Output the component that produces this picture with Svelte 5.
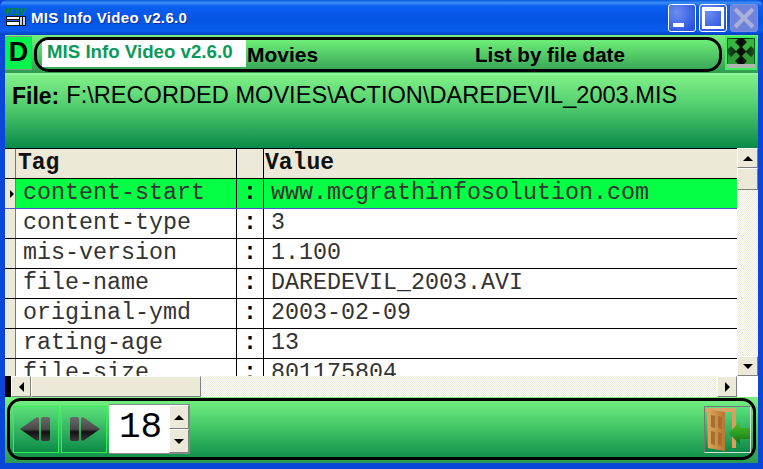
<script>
	const rows = [
		['content-start', 'www.mcgrathinfosolution.com'],
		['content-type', '3'],
		['mis-version', '1.100'],
		['file-name', 'DAREDEVIL_2003.AVI'],
		['original-ymd', '2003-02-09'],
		['rating-age', '13'],
		['file-size', '801175804']
	];
</script>

<div class="window">
	<div class="titlebar">
		<svg class="app-icon" width="20" height="22" viewBox="0 0 20 22">
			<text x="0" y="8" font-family="Liberation Mono" font-weight="bold" font-size="11" fill="#0a8a14" textLength="20" lengthAdjust="spacingAndGlyphs">MIV</text>
			<rect x="0" y="9" width="20" height="10" fill="#111" />
			<rect x="1" y="10" width="12" height="2" fill="#fff" />
			<rect x="1" y="13" width="12" height="1" fill="#2f5fe0" />
			<rect x="1" y="15" width="12" height="3" fill="#fff" />
			<rect x="14" y="10" width="5" height="8" fill="#c8d4e8" />
			<rect x="16" y="9" width="1" height="10" fill="#111" />
		</svg>
		<span class="title">MIS Info Video v2.6.0</span>
		<div class="winbtns">
			<div class="winbtn">
				<span class="min-glyph"></span>
			</div>
			<div class="winbtn">
				<span class="max-glyph"></span>
			</div>
			<div class="winbtn disabled">
				<svg width="22" height="22" viewBox="0 0 22 22">
					<path d="M2 2 L20 20 M20 2 L2 20" stroke="#aab0d8" stroke-width="4" />
				</svg>
			</div>
		</div>
	</div>

	<div class="client">
		<div class="topbar">
			<div class="d-btn">D</div>
			<div class="pill">
				<span class="app-name">MIS Info Video v2.6.0</span>
				<span class="movies">Movies</span>
				<span class="sort">List by file date</span>
			</div>
			<div class="expand">
				<svg width="28" height="30" viewBox="0 0 28 30">
					<defs>
						<linearGradient id="dk" x1="0" y1="0" x2="1" y2="0">
							<stop offset="0" stop-color="#1c5a24" />
							<stop offset="0.5" stop-color="#060606" />
							<stop offset="1" stop-color="#1c5a24" />
						</linearGradient>
					</defs>
					<rect width="28" height="30" fill="url(#dk)" />
					<path d="M1 1 L11 1 L8 4 L13 9 L9 13 L4 8 L1 11 Z" fill="#36b83e" />
					<path d="M27 1 L17 1 L20 4 L15 9 L19 13 L24 8 L27 11 Z" fill="#36b83e" />
					<path d="M1 26 L11 26 L8 23 L13 18 L9 14 L4 19 L1 16 Z" fill="#2f9e36" />
					<path d="M27 26 L17 26 L20 23 L15 18 L19 14 L24 19 L27 16 Z" fill="#2f9e36" />
					<rect x="0" y="26" width="28" height="4" fill="#b0b4ae" />
				</svg>
			</div>
		</div>

		<div class="filepanel">
			<span class="file-label">File:</span>
			<span class="file-path">F:\RECORDED MOVIES\ACTION\DAREDEVIL_2003.MIS</span>
		</div>

		<div class="gridarea">
			<div class="grid">
				<div class="row head">
					<div class="ind"></div>
					<div class="cell tag">Tag</div>
					<div class="cell sep"></div>
					<div class="cell val">Value</div>
				</div>
				{#each rows as r, i}
					<div class="row" class:current={i === 0}>
						<div class="ind">
							{#if i === 0}<span class="pointer"></span>{/if}
						</div>
						<div class="cell tag">{r[0]}</div>
						<div class="cell sep">:</div>
						<div class="cell val">{r[1]}</div>
					</div>
				{/each}
			</div>
			<div class="vscroll">
				<div class="sbtn"><span class="arrow up"></span></div>
				<div class="thumb-v"></div>
				<div class="track"></div>
				<div class="sbtn"><span class="arrow down"></span></div>
			</div>
		</div>

		<div class="hscrollrow">
			<div class="blackstub"></div>
			<div class="hscroll">
				<div class="sbtn wide"><span class="arrow left"></span></div>
				<div class="thumb-h"></div>
				<div class="track"></div>
				<div class="sbtn wide"><span class="arrow right"></span></div>
			</div>
			<div class="corner"></div>
		</div>

		<div class="bottompanel">
			<div class="bottompill">
				<div class="navbtn">
					<svg width="44" height="30" viewBox="0 0 44 30">
						<defs>
							<linearGradient id="metal" x1="0" y1="0" x2="0" y2="1">
								<stop offset="0" stop-color="#6a6a6a" />
								<stop offset="0.5" stop-color="#4a4a4a" />
								<stop offset="0.62" stop-color="#111" />
								<stop offset="1" stop-color="#3a3a3a" />
							</linearGradient>
						</defs>
						<path d="M6 15 L23 3 L25 4 L25 26 L23 27 Z" fill="url(#metal)" />
						<rect x="27" y="3" width="9" height="24" rx="2" fill="url(#metal)" />
					</svg>
				</div>
				<div class="navbtn">
					<svg width="44" height="30" viewBox="0 0 44 30">
						<rect x="8" y="3" width="9" height="24" rx="2" fill="url(#metal)" />
						<path d="M38 15 L21 3 L19 4 L19 26 L21 27 Z" fill="url(#metal)" />
					</svg>
				</div>
				<div class="spin">
					<span class="spin-val">18</span>
					<div class="spin-btns">
						<div class="sbtn spinb"><span class="arrow up"></span></div>
						<div class="sbtn spinb"><span class="arrow down"></span></div>
					</div>
				</div>
				<div class="exit">
					<svg width="45" height="45" viewBox="0 0 45 45">
						<defs>
							<linearGradient id="wood" x1="0" y1="0" x2="1" y2="0">
								<stop offset="0" stop-color="#e0a860" />
								<stop offset="1" stop-color="#b87530" />
							</linearGradient>
							<linearGradient id="arw" x1="0" y1="0" x2="0" y2="1">
								<stop offset="0" stop-color="#4fc22c" />
								<stop offset="0.55" stop-color="#2c9a1e" />
								<stop offset="1" stop-color="#0b6a14" />
							</linearGradient>
						</defs>
						<path d="M1 1 L31 1 L31 5 L1 5 Z" fill="#d8a468" />
						<rect x="27" y="4" width="4" height="37" fill="#d9a05c" />
						<path d="M2 2 L20 5 L20 44 L3 41 Z" fill="url(#wood)" />
						<path d="M6 8 L10 9 L10 21 L6 20 Z" fill="#a86c2c" />
						<path d="M13 9 L17 10 L17 22 L13 21 Z" fill="#a86c2c" />
						<path d="M6 24 L10 25 L10 38 L6 37 Z" fill="#a86c2c" />
						<path d="M13 25 L17 26 L17 39 L13 38 Z" fill="#a86c2c" />
						<path d="M24 26 L35 14 L35 21 L45 21 L45 32 L35 32 L35 38 Z" fill="url(#arw)" />
					</svg>
				</div>
			</div>
		</div>
	</div>
</div>

<style>
	:global(body) {
		margin: 0;
		overflow: hidden;
	}
	.window {
		width: 763px;
		height: 469px;
		display: flex;
		flex-direction: column;
		box-sizing: border-box;
		background: #0a47d8;
		font-family: "Liberation Sans", Arial, sans-serif;
		overflow: hidden;
	}
	.titlebar {
		height: 35px;
		flex: none;
		display: flex;
		align-items: center;
		padding: 0 5px 0 6px;
		box-sizing: border-box;
		background: linear-gradient(180deg, #0a5be0 0%, #3c8df5 8%, #0a5ff0 18%, #0553e2 60%, #0a5ff0 88%, #0340c0 100%);
		border-radius: 7px 7px 0 0;
	}
	.app-icon {
		flex: none;
		margin-top: 1px;
	}
	.title {
		margin-left: 5px;
		color: #fff;
		font: bold 15px "Liberation Sans", Arial, sans-serif;
		letter-spacing: 0.35px;
		text-shadow: 1px 1px 0 #0f2fa0;
	}
	.winbtns {
		margin-left: auto;
		display: flex;
		gap: 3px;
	}
	.winbtn {
		width: 26px;
		height: 26px;
		border: 1px solid #fff;
		border-radius: 3px;
		background: radial-gradient(circle at 30% 30%, #6d8ef0, #2a55e0 80%);
		position: relative;
		display: flex;
		align-items: center;
		justify-content: center;
	}
	.winbtn.disabled {
		border-color: #7a8fe0;
		background: #6f83dc;
	}
	.min-glyph {
		position: absolute;
		left: 4px;
		bottom: 4px;
		width: 11px;
		height: 4px;
		background: #fff;
	}
	.max-glyph {
		width: 16px;
		height: 15px;
		border: 3px solid #fff;
		border-top-width: 4px;
	}
	.client {
		flex: 1;
		min-height: 0;
		margin: 0 5px 6px;
		display: flex;
		flex-direction: column;
		background: #ece9d8;
	}
	.topbar {
		height: 38px;
		flex: none;
		display: flex;
		align-items: flex-start;
		gap: 2px;
		padding-top: 1px;
		box-sizing: border-box;
		background: linear-gradient(180deg, #7af07e, #2f9a50);
	}
	.d-btn {
		width: 27px;
		height: 34px;
		box-sizing: border-box;
		background: #05f54e;
		border: 1px solid #8a9a8a;
		font: bold 27px "Liberation Sans", Arial, sans-serif;
		line-height: 30px;
		text-align: center;
		color: #000;
	}
	.pill {
		width: 688px;
		height: 35px;
		margin-top: 1px;
		box-sizing: border-box;
		border: 3px solid #000;
		border-radius: 15px;
		display: flex;
		align-items: center;
		padding-left: 5px;
		background: linear-gradient(180deg, #6eee78, #3aa858);
		overflow: hidden;
	}
	.app-name {
		background: #fff;
		color: #0a9a5a;
		font: bold 18.7px "Liberation Sans", Arial, sans-serif;
		width: 204px;
		height: 27px;
		line-height: 24px;
		padding-left: 5px;
		box-sizing: border-box;
		flex: none;
		margin-top: -2px;
		white-space: nowrap;
	}
	.movies {
		font: bold 21px "Liberation Sans", Arial, sans-serif;
		margin-left: 1px;
		width: 228px;
		flex: none;
	}
	.sort {
		font: bold 20.6px "Liberation Sans", Arial, sans-serif;
	}
	.expand {
		margin-left: 1px;
		width: 32px;
		height: 34px;
		box-sizing: border-box;
		border: 2px solid #3df060;
		display: flex;
		align-items: center;
		justify-content: center;
		background: #c8e8c8;
	}
	.filepanel {
		height: 75px;
		flex: none;
		box-sizing: border-box;
		padding: 8px 7px 0;
		display: flex;
		align-items: baseline;
		gap: 7px;
		border-top: 2px solid #90f59a;
		background: linear-gradient(180deg, #80f088 0%, #55d070 40%, #0a8a48 100%);
	}
	.file-label {
		font: bold 23px "Liberation Sans", Arial, sans-serif;
		color: #000;
	}
	.file-path {
		font: 23.6px "Liberation Sans", Arial, sans-serif;
		color: #000;
		position: relative;
		top: -1px;
	}
	.gridarea {
		height: 228px;
		flex: none;
		display: flex;
		overflow: hidden;
	}
	.grid {
		width: 732px;
		flex: none;
		background: #fff;
		overflow: hidden;
		border-top: 1px solid #000;
		box-sizing: border-box;
	}
	.row {
		display: flex;
		height: 30px;
		box-sizing: border-box;
		border-bottom: 1px solid #000;
		font: 23.33px "Liberation Mono", "Courier New", monospace;
		color: #333;
	}
	.ind {
		width: 11px;
		flex: none;
		background: #ece9d8;
		border-left: 1px solid #ece9d8;
		box-sizing: border-box;
		display: flex;
		align-items: center;
		justify-content: flex-end;
		border-right: 1px solid #777;
	}
	.pointer {
		width: 0;
		height: 0;
		border-left: 4px solid #000;
		border-top: 4px solid transparent;
		border-bottom: 4px solid transparent;
		margin-right: 1px;
	}
	.cell {
		box-sizing: border-box;
		line-height: 28px;
		white-space: nowrap;
		overflow: hidden;
	}
	.tag {
		width: 221px;
		padding-left: 7px;
		border-right: 1px solid #000;
		flex: none;
	}
	.sep {
		width: 27px;
		flex: none;
		text-align: center;
		font-weight: bold;
		color: #000;
		border-right: 1px solid #000;
	}
	.val {
		flex: 1;
		padding-left: 7px;
	}
	.head {
		background: #ece9d8;
		font-weight: bold;
		color: #111;
		font-size: 23px;
	}
	.head .tag {
		padding-left: 2px;
	}
	.head .val {
		padding-left: 1px;
	}
	.current {
		background: #05ff44;
		border-bottom-color: #4a58c8;
	}
	.vscroll {
		width: 21px;
		flex: none;
		display: flex;
		flex-direction: column;
		background: repeating-conic-gradient(#ece9d8 0 25%, #fff 0 50%) 0 0 / 2px 2px;
	}
	.sbtn {
		box-sizing: border-box;
		background: #ece9d8;
		border: 1px solid;
		border-color: #fff #808080 #808080 #fff;
		display: flex;
		align-items: center;
		justify-content: center;
		flex: none;
		height: 20px;
	}
	.thumb-v {
		height: 22px;
		flex: none;
		box-sizing: border-box;
		background: #ece9d8;
		border: 1px solid;
		border-color: #fff #808080 #808080 #fff;
	}
	.track {
		flex: 1;
	}
	.arrow {
		width: 0;
		height: 0;
	}
	.arrow.up {
		border-left: 5px solid transparent;
		border-right: 5px solid transparent;
		border-bottom: 5px solid #000;
	}
	.arrow.down {
		border-left: 5px solid transparent;
		border-right: 5px solid transparent;
		border-top: 5px solid #000;
	}
	.arrow.left {
		border-top: 5px solid transparent;
		border-bottom: 5px solid transparent;
		border-right: 5px solid #000;
	}
	.arrow.right {
		border-top: 5px solid transparent;
		border-bottom: 5px solid transparent;
		border-left: 5px solid #000;
	}
	.hscrollrow {
		height: 21px;
		flex: none;
		display: flex;
		background: #fff;
	}
	.blackstub {
		width: 6px;
		flex: none;
		background: #000;
	}
	.hscroll {
		width: 726px;
		flex: none;
		display: flex;
		background: repeating-conic-gradient(#ece9d8 0 25%, #fff 0 50%) 0 0 / 2px 2px;
	}
	.sbtn.wide {
		width: 20px;
		height: auto;
	}
	.thumb-h {
		width: 170px;
		flex: none;
		box-sizing: border-box;
		background: #ece9d8;
		border: 1px solid;
		border-color: #fff #808080 #808080 #fff;
	}
	.corner {
		flex: 1;
	}
	.bottompanel {
		flex: 1;
		min-height: 0;
		padding: 1px 2px 2px;
		background: linear-gradient(180deg, #7af07e, #2a9a50);
	}
	.bottompill {
		height: 62px;
		box-sizing: border-box;
		border: 3px solid #000;
		border-radius: 14px;
		display: flex;
		align-items: center;
		padding: 3px 2px 3px 3px;
		gap: 2px;
		background: linear-gradient(180deg, #72ee80 0%, #45c868 45%, #12924c 100%);
	}
	.navbtn {
		width: 46px;
		height: 47px;
		box-sizing: border-box;
		border: 1px solid #35ee55;
		background: linear-gradient(180deg, #5ae07a, #0c8a48);
		display: flex;
		align-items: center;
		justify-content: center;
	}
	.spin {
		height: 50px;
		width: 81px;
		box-sizing: border-box;
		background: #fff;
		display: flex;
		align-items: stretch;
		border: 1px solid #888;
		border-left: none;
	}
	.spin-val {
		flex: 1;
		font: 36px "Liberation Mono", "Courier New", monospace;
		line-height: 46px;
		padding-left: 10px;
		color: #000;
		white-space: nowrap;
	}
	.spin-btns {
		width: 20px;
		flex: none;
		display: flex;
		flex-direction: column;
	}
	.spinb {
		flex: 1;
		height: auto;
	}
	.exit {
		margin-left: auto;
		width: 47px;
		height: 47px;
		box-sizing: border-box;
		border: 1px solid #777;
		border-right-color: #ddd;
		border-bottom-color: #ddd;
		background: linear-gradient(180deg, #5ae07a, #0c8a48);
	}
</style>
